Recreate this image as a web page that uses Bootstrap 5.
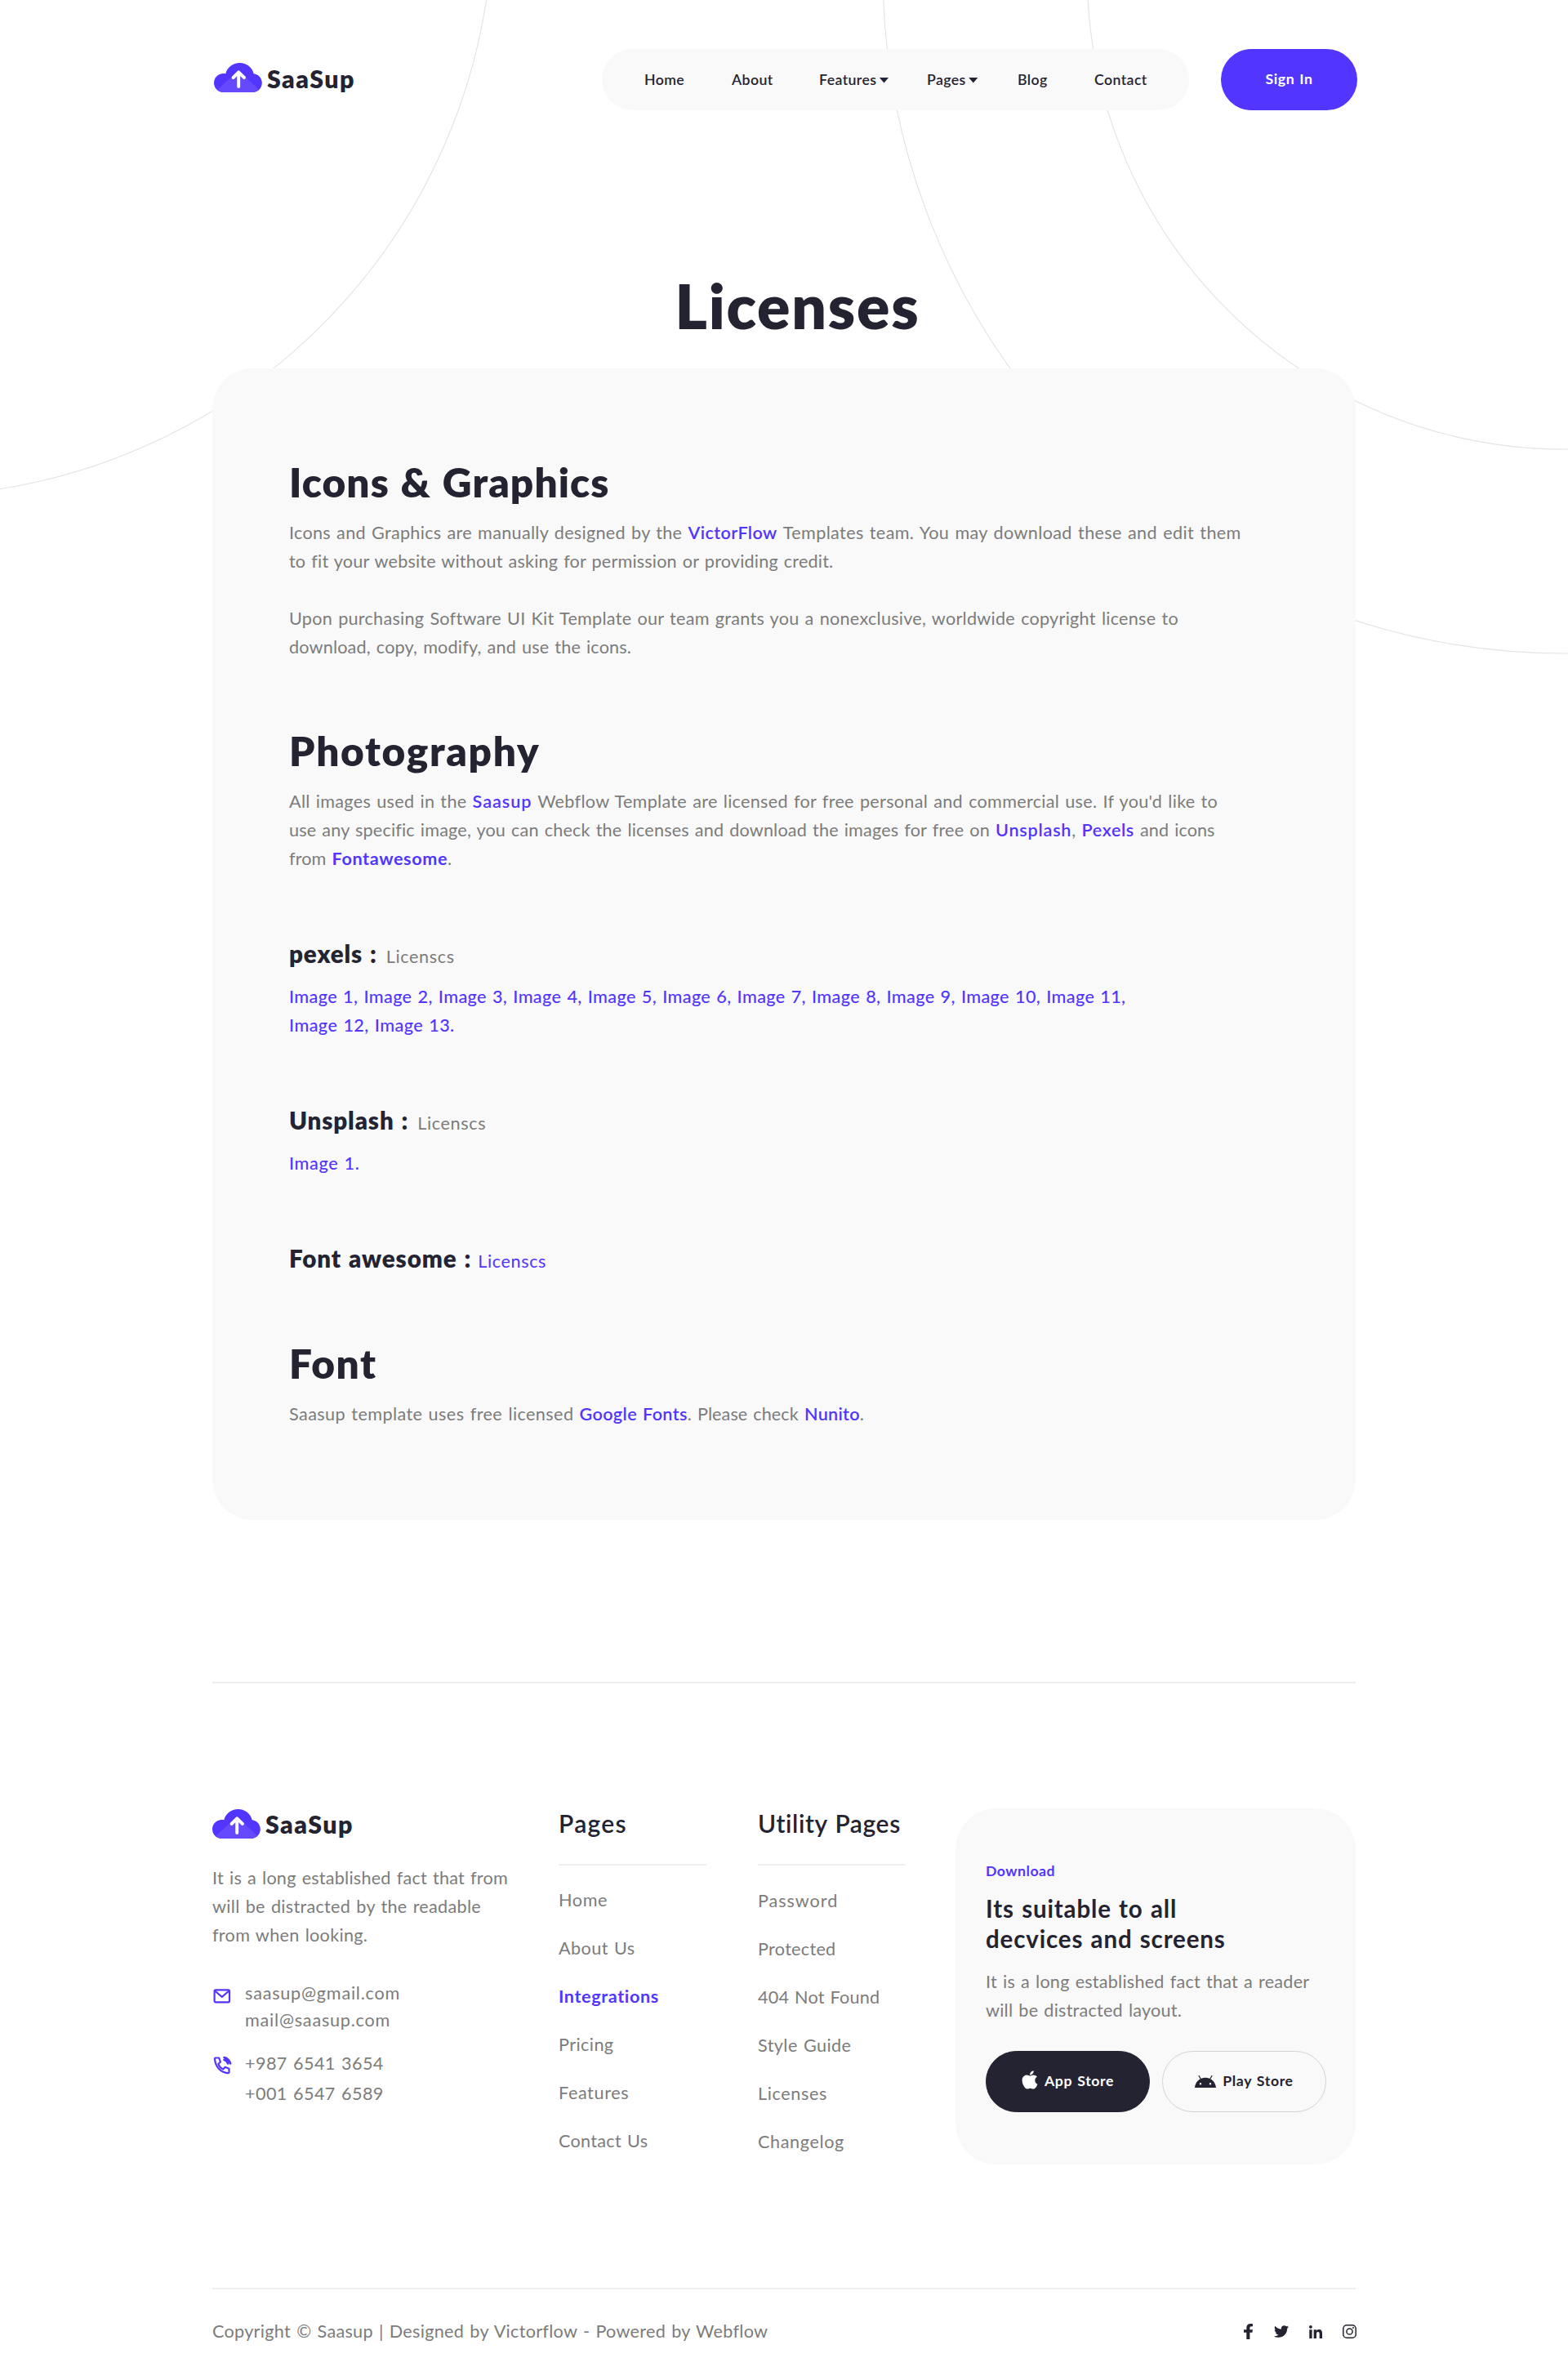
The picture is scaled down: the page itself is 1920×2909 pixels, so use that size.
<!DOCTYPE html>
<html lang="en">
<head>
<meta charset="utf-8">
<meta name="viewport" content="width=device-width, initial-scale=1">
<title>SaaSup - Licenses</title>
<link href="https://cdn.jsdelivr.net/npm/bootstrap@5.3.0/dist/css/bootstrap.min.css" rel="stylesheet">
<style>
:root{--ink:#242331;--accent:#5235ff;--soft:#f9f9f9;--muted:#7c7c7c;--rule:#efefef}
body{font-family:Lato,sans-serif;font-size:21.6px;line-height:35px;color:var(--muted);word-spacing:.06em;letter-spacing:.3px;background:#fff}
a{text-decoration:none;color:inherit}
.site-wrap{width:1400px;margin:0 auto;position:relative}
.backdrop{position:absolute;left:0;top:0;width:1920px;height:820px;pointer-events:none}
/* tracking steps */
.tr-0{letter-spacing:.1px}.tr-10{letter-spacing:.18px}.tr-20{letter-spacing:.23px}.tr-25{letter-spacing:.27px}.tr-35{letter-spacing:.37px}.tr-40{letter-spacing:.42px}.tr-60{letter-spacing:.62px}.tr-80{letter-spacing:.78px}.tr-90{letter-spacing:.95px}
.accent{color:var(--accent);font-weight:600}
.accent-md{color:var(--accent);font-weight:500}
/* header */
.site-head{padding-top:60px;margin-right:-2px}
.logo{color:var(--ink);font-weight:800;font-size:30.3px;line-height:36px;letter-spacing:1.5px}
.logo svg{width:59px;height:36px;display:block}
.logo span{margin-left:6px;padding-top:1px}
.site-head .logo{padding:0 0 5px 2px}
.menu-pill{width:719px;height:75px;border-radius:38px;background:var(--soft);padding-left:52px;margin-right:39px}
.menu-pill .nav-link{padding:0;color:var(--ink);font-weight:600;font-size:17.7px;line-height:24px;letter-spacing:.42px}
.nav-w1{width:107px}.nav-w2{width:107px}.nav-w3{width:132px}.nav-w4{width:111px}.nav-w5{width:94px}
.caret{display:inline-block;width:12px;height:7px;margin-left:3px;background:var(--ink);clip-path:polygon(0 0,100% 0,50% 100%);vertical-align:2px}
.btn-sign{width:167px;height:75px;border-radius:38px;background:var(--accent);color:#fff;font-weight:700;font-size:17.7px;letter-spacing:.55px;line-height:24px;border:0;padding:0 0 2px}
.btn-sign:hover{background:#4329e0;color:#fff}
/* title and panel */
h1.page-title{font-size:75px;font-weight:800;line-height:90px;letter-spacing:1.8px;color:var(--ink);margin:194px 0 32px;padding-left:33px;text-align:center}
.license-panel{background:var(--soft);border-radius:50px;padding:109px 94px 112px}
.license-panel h2{font-size:49.5px;font-weight:800;line-height:60px;color:var(--ink);margin:79px 0 15px}
.license-panel h2:first-child{margin-top:0}
.license-panel h3{font-size:29.5px;font-weight:800;line-height:38px;height:38px;color:var(--ink);margin:80px 0 0;letter-spacing:.9px}
.license-panel p{margin:0}
.source-note{font-size:21.6px;font-weight:400;letter-spacing:.62px;line-height:1}
.source-muted{color:var(--muted);margin-left:2px}
.license-panel .image-list{margin-top:16px}
.nowrap{white-space:nowrap}
/* footer */
.foot-rule{height:2px;background:var(--rule)}
.foot-grid{display:grid;grid-template-columns:424px 244px 242px 490px;margin-top:153px;height:587px}
.foot-title{font-size:30px;font-weight:600;line-height:36px;color:var(--ink);margin:0;white-space:nowrap;letter-spacing:.6px}
.foot-links{list-style:none;margin:32px 0 0;padding:25px 0 0;border-top:2px solid var(--rule);width:181px}
.foot-links li{line-height:35px;margin-bottom:24px;white-space:nowrap}
.contact-row{display:flex}
.contact-row svg{flex:none;display:block}
.download-card{background:var(--soft);border-radius:50px;height:436px;padding:65px 0 0 37px}
.download-card h4{font-size:29.5px;font-weight:700;line-height:37px;color:var(--ink);margin:15px 0 0;letter-spacing:.85px}
.store-btn{height:75px;width:201px;border-radius:38px;font-size:17.7px;font-weight:700;line-height:24px;letter-spacing:.6px;display:flex;align-items:center;justify-content:center;border:1px solid #d3d3d3;color:var(--ink);padding:0 0 1px}
.store-dark{background:var(--ink);border-color:var(--ink);color:#fff}
.foot-end{height:105px}
</style>
</head>
<body>
<svg class="backdrop" viewBox="0 0 1920 820" fill="none" stroke="#e3e3e3" stroke-width="1.1">
  <circle cx="-111" cy="-107.5" r="714.6"/>
  <circle cx="1916" cy="-35" r="585"/>
  <circle cx="1916" cy="-35" r="835"/>
</svg>
<svg width="0" height="0" class="position-absolute">
  <symbol id="cloud" viewBox="0 0 59 36">
    <clipPath id="cloudShape"><path d="M11.6 36C5 36 0 31 0 24.6S5 13 11.6 13c.9 0 1.900 0 2.700.200C16 5.500 23.200 0 31.600 0 40 0 47 5.700 48.700 13.200 54.500 13.800 58.800 18.600 58.800 24.500 58.800 30.900 53.700 36 47.300 36Z"/></clipPath>
    <g clip-path="url(#cloudShape)"><rect width="59" height="36" fill="#5235ff"/><path d="M30.500 9 59 36.500H0Z" fill="#6549ff"/></g>
    <path d="M30.200 11.500V29M23.600 18l6.600-6.600 6.800 6.600" fill="none" stroke="#fff" stroke-width="3.900" stroke-linecap="round" stroke-linejoin="round"/>
  </symbol>
</svg>

<div class="site-wrap">
  <header class="site-head d-flex align-items-center">
    <a href="#" class="logo d-flex align-items-center me-auto"><svg><use href="#cloud"/></svg><span>SaaSup</span></a>
    <nav class="menu-pill d-flex align-items-center">
      <a class="nav-link nav-w1" href="#">Home</a>
      <a class="nav-link nav-w2" href="#">About</a>
      <a class="nav-link nav-w3" href="#">Features<i class="caret"></i></a>
      <a class="nav-link nav-w4" href="#">Pages<i class="caret"></i></a>
      <a class="nav-link nav-w5" href="#">Blog</a>
      <a class="nav-link" href="#">Contact</a>
    </nav>
    <a href="#" class="btn btn-sign d-flex align-items-center justify-content-center">Sign In</a>
  </header>

  <main>
    <h1 class="page-title">Licenses</h1>
    <section class="license-panel">
      <h2 style="letter-spacing:1.1px">Icons &amp; Graphics</h2>
      <p class="nowrap">Icons and Graphics are manually designed by the <a href="#" class="accent tr-40">VictorFlow</a> <span class="tr-35">Templates team. You may download these and edit them</span><br>
      <span class="tr-10">to fit your website without asking for permission or providing credit.</span></p>
      <p class="nowrap"><br><span class="tr-25">Upon purchasing Software UI Kit Template our team grants you a nonexclusive, worldwide copyright license to</span><br>
      <span class="tr-10">download, copy, modify, and use the icons.</span></p>

      <h2 style="letter-spacing:1.7px">Photography</h2>
      <p class="nowrap">All images used in the <a href="#" class="accent tr-90">Saasup</a> Webflow Template are licensed for free personal and commercial use. If you'd like to<br>
      <span class="tr-10">use any specific image, you can check the licenses and download the images for free on</span> <a href="#" class="accent tr-80">Unsplash</a>, <a href="#" class="accent tr-60">Pexels</a> <span class="tr-0">and icons</span><br>
      <span class="tr-0">from</span> <a href="#" class="accent tr-60 fw-bold">Fontawesome</a>.</p>

      <h3>pexels : <span class="source-note source-muted">Licenscs</span></h3>
      <p class="image-list accent-md tr-35 nowrap">Image 1, Image 2, Image 3, Image 4, Image 5, Image 6, Image 7, Image 8, Image 9, Image 10, Image 11,<br><span class="tr-40">Image 12, Image 13.</span></p>

      <h3>Unsplash : <span class="source-note source-muted">Licenscs</span></h3>
      <p class="image-list accent-md tr-60">Image 1.</p>

      <h3>Font awesome :<a href="#" class="accent-md source-note ms-2">Licenscs</a></h3>

      <h2 style="letter-spacing:1.5px">Font</h2>
      <p class="nowrap"><span class="tr-40">Saasup template uses free licensed</span> <a href="#" class="accent tr-35">Google Fonts</a><span class="tr-0">. Please check</span> <a href="#" class="accent">Nunito</a>.</p>
    </section>
  </main>

  <footer style="padding-top:198px">
    <div class="foot-rule"></div>
    <div class="foot-grid">
      <div>
        <a href="#" class="logo d-flex align-items-center"><svg><use href="#cloud"/></svg><span>SaaSup</span></a>
        <p class="nowrap mb-0" style="margin-top:31px"><span class="tr-20">It is a long established fact that from</span><br>will be distracted by the readable<br>from when looking.</p>
        <div class="contact-row" style="margin-top:37px;line-height:33px">
          <svg width="40" height="33" viewBox="0 0 40 33" fill="none" stroke="#5235ff" stroke-width="2.200" stroke-linejoin="round"><rect x="2.600" y="12.300" width="18.400" height="15" rx="1.500"/><path d="m3.200 13.500 8.600 7.300 8.600-7.300"/></svg>
          <div class="tr-80">saasup@gmail.com<br>mail@saasup.com</div>
        </div>
        <div class="contact-row" style="margin-top:18px;line-height:37px">
          <svg width="40" height="37" viewBox="0 0 40 37" fill="none" stroke="#5235ff" stroke-width="2.200" stroke-linejoin="round" stroke-linecap="round"><path d="M4 11.500h4.200l1.800 5-2.600 2.300c1.100 3.100 3 5.300 6 6.600l2.200-2.600 4.900 1.900v4.400c0 .8-.6 1.200-1.400 1.100C10.300 29.400 4 23 2.900 12.800c-.1-.8.300-1.300 1.100-1.300Z"/><path d="M14.500 11c4.200 1 6.500 3.400 7.600 7.400M14.500 14c2.600.6 4 2 4.600 4.500M15.500 11.500l4 4.500" stroke-width="2.700"/></svg>
          <div class="tr-40">+987 6541 3654<br>+001 6547 6589</div>
        </div>
      </div>
      <div>
        <h4 class="foot-title" style="letter-spacing:1.3px">Pages</h4>
        <ul class="foot-links">
          <li class="tr-60"><a href="#">Home</a></li>
          <li class="tr-40"><a href="#">About Us</a></li>
          <li class="tr-60"><a href="#" class="accent fw-bold">Integrations</a></li>
          <li class="tr-40"><a href="#">Pricing</a></li>
          <li class="tr-60"><a href="#">Features</a></li>
          <li><a href="#">Contact Us</a></li>
        </ul>
      </div>
      <div>
        <h4 class="foot-title pt-0">Utility Pages</h4>
        <ul class="foot-links" style="padding-top:26px">
          <li class="tr-90"><a href="#">Password</a></li>
          <li><a href="#">Protected</a></li>
          <li class="tr-10"><a href="#">404 Not Found</a></li>
          <li class="tr-40"><a href="#">Style Guide</a></li>
          <li class="tr-60"><a href="#">Licenses</a></li>
          <li class="tr-60"><a href="#">Changelog</a></li>
        </ul>
      </div>
      <div class="download-card">
        <div class="accent fw-bold" style="font-size:17.7px;line-height:24px;letter-spacing:.5px">Download</div>
        <h4>Its suitable to all<br>decvices and screens</h4>
        <p class="mb-0 tr-20 nowrap" style="margin-top:17px">It is a long established fact that a reader<br>will be distracted layout.</p>
        <div class="d-flex" style="gap:15px;margin-top:32px">
          <a href="#" class="store-btn store-dark"><svg width="20" height="23" viewBox="0 28 384 460" class="me-2" style="margin-bottom:3px" fill="#fff"><path d="M318.700 268.700c-.2-36.700 16.400-64.400 50-84.800-18.800-26.900-47.200-41.700-84.700-44.600-35.500-2.800-74.300 20.700-88.500 20.700-15 0-49.400-19.700-76.400-19.700C63.300 141.200 4 184.800 4 273.500q0 39.300 14.400 81.200c12.800 36.700 59 126.700 107.200 125.200 25.200-.6 43-17.900 75.800-17.900 31.800 0 48.300 17.900 76.400 17.900 48.600-.7 90.400-82.500 102.600-119.300-65.200-30.700-61.700-90-61.700-91.900zm-56.600-164.200c27.300-32.400 24.800-61.900 24-72.500-24.100 1.400-52 16.400-67.900 34.900-17.500 19.800-27.800 44.300-25.600 71.900 26.100 2 49.900-11.400 69.500-34.300z"/></svg>App Store</a>
          <a href="#" class="store-btn"><svg width="26" height="15" viewBox="0 0 26 15" class="me-2" fill="#242331"><path fill-rule="evenodd" d="M0 15C.5 8 6 2.700 13 2.700S25.500 8 26 15ZM7 9a1.200 1.200 0 1 0 0 2.400A1.200 1.200 0 0 0 7 9Zm12 0a1.200 1.200 0 1 0 0 2.400A1.200 1.200 0 0 0 19 9Z"/><path d="m5 .4 2.500 4.200M21 .4l-2.500 4.200" stroke="#242331" stroke-width="1.100" stroke-linecap="round"/></svg>Play Store</a>
        </div>
      </div>
    </div>
    <div class="foot-rule"></div>
    <div class="foot-end d-flex justify-content-between">
      <div style="padding-top:34px">Copyright © Saasup | Designed by Victorflow - Powered by Webflow</div>
      <div class="d-flex align-items-center" style="height:103px;margin-right:-1px">
        <svg width="11" height="19" viewBox="22 0 272 512" preserveAspectRatio="none" fill="#242331" style="margin-right:26px"><path d="M279.140 288l14.220-92.660h-88.910v-60.130c0-25.350 12.420-50.060 52.240-50.060h40.420V6.260S260.430 0 225.360 0c-73.220 0-121.080 44.380-121.080 124.720v70.620H22.890V288h81.390v224h100.170V288z"/></svg>
        <svg width="18" height="15" viewBox="0 48 512 416" fill="#242331" style="margin-right:25px"><path d="M459.370 151.716c.325 4.548.325 9.097.325 13.645 0 138.720-105.583 298.558-298.558 298.558-59.452 0-114.680-17.219-161.137-47.106 8.447.974 16.568 1.299 25.340 1.299 49.055 0 94.213-16.568 130.274-44.832-46.132-.975-84.792-31.188-98.112-72.772 6.498.974 12.995 1.624 19.818 1.624 9.421 0 18.843-1.300 27.614-3.573-48.081-9.747-84.143-51.980-84.143-102.985v-1.299c13.969 7.797 30.214 12.670 47.431 13.319-28.264-18.843-46.781-51.005-46.781-87.391 0-19.492 5.197-37.360 14.294-52.954 51.655 63.675 129.300 105.258 216.365 109.807-1.624-7.797-2.599-15.918-2.599-24.040 0-57.828 46.782-104.934 104.934-104.934 30.213 0 57.502 12.670 76.670 33.137 23.715-4.548 46.456-13.320 66.599-25.340-7.798 24.366-24.366 44.833-46.132 57.827 21.117-2.273 41.584-8.122 60.426-16.243-14.292 20.791-32.161 39.308-52.628 54.253z"/></svg>
        <svg width="16" height="16" viewBox="0 0 448 448" fill="#242331" style="margin-right:25px"><path d="M100.280 448H7.400V148.900h92.880zM53.790 108.100C24.090 108.100 0 83.500 0 53.800a53.790 53.790 0 0 1 107.580 0c0 29.700-24.100 54.300-53.790 54.300zM447.900 448h-92.680V302.400c0-34.700-.7-79.200-48.290-79.200-48.290 0-55.690 37.700-55.690 76.700V448h-92.780V148.900h89.080v40.800h1.300c12.400-23.500 42.690-48.300 87.880-48.300 94 0 111.280 61.900 111.280 142.300V448z"/></svg>
        <svg width="17" height="17" viewBox="0 0 17 17" fill="none" stroke="#242331" stroke-width="1.500"><rect x=".8" y=".8" width="15.400" height="15.400" rx="4.300"/><circle cx="8.500" cy="8.500" r="3.600"/><circle cx="13" cy="4" r="1" fill="#242331" stroke="none"/></svg>
      </div>
    </div>
  </footer>
</div>
<script src="https://cdn.jsdelivr.net/npm/bootstrap@5.3.0/dist/js/bootstrap.bundle.min.js"></script>
</body>
</html>
